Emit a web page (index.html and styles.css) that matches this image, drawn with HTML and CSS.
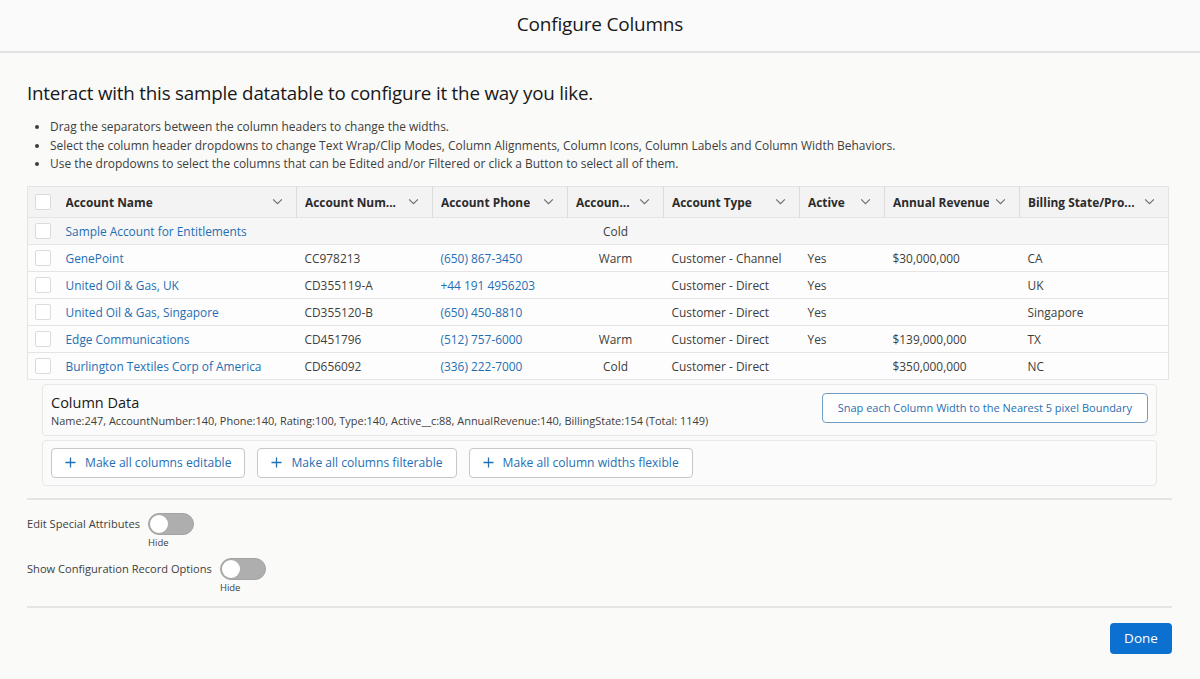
FILE: index.html
```html
<!DOCTYPE html>
<html>
<head>
<meta charset="utf-8">
<link rel="stylesheet" href="styles.css">
</head>
<body>
<header class="modal-header"><h1 class="modal-title">Configure Columns</h1></header>
<main class="modal-body">
  <h2 class="intro">Interact with this sample datatable to configure it the way you like.</h2>
  <ul class="tips">
    <li>Drag the separators between the column headers to change the widths.</li>
    <li>Select the column header dropdowns to change Text Wrap/Clip Modes, Column Alignments, Column Icons, Column Labels and Column Width Behaviors.</li>
    <li>Use the dropdowns to select the columns that can be Edited and/or Filtered or click a Button to select all of them.</li>
  </ul>

  <table class="dt">
    <colgroup>
      <col class="c-chk"><col class="c-name"><col class="c-num"><col class="c-phone"><col class="c-rating"><col class="c-type"><col class="c-active"><col class="c-rev"><col class="c-bill">
    </colgroup>
    <thead>
      <tr>
        <th><span class="cb"></span></th>
        <th><div class="th-in"><span class="th-label">Account Name</span><svg class="chev" viewBox="0 0 12 8"><path d="M1 1.5l5 5 5-5"/></svg></div></th>
        <th><div class="th-in"><span class="th-label">Account Num...</span><svg class="chev" viewBox="0 0 12 8"><path d="M1 1.5l5 5 5-5"/></svg></div></th>
        <th><div class="th-in"><span class="th-label">Account Phone</span><svg class="chev" viewBox="0 0 12 8"><path d="M1 1.5l5 5 5-5"/></svg></div></th>
        <th><div class="th-in"><span class="th-label">Accoun...</span><svg class="chev" viewBox="0 0 12 8"><path d="M1 1.5l5 5 5-5"/></svg></div></th>
        <th><div class="th-in"><span class="th-label">Account Type</span><svg class="chev" viewBox="0 0 12 8"><path d="M1 1.5l5 5 5-5"/></svg></div></th>
        <th><div class="th-in"><span class="th-label">Active</span><svg class="chev" viewBox="0 0 12 8"><path d="M1 1.5l5 5 5-5"/></svg></div></th>
        <th><div class="th-in"><span class="th-label">Annual Revenue</span><svg class="chev" viewBox="0 0 12 8"><path d="M1 1.5l5 5 5-5"/></svg></div></th>
        <th class="last"><div class="th-in"><span class="th-label">Billing State/Pro...</span><svg class="chev" viewBox="0 0 12 8"><path d="M1 1.5l5 5 5-5"/></svg></div></th>
      </tr>
    </thead>
    <tbody>
      <tr class="hover">
        <td><span class="cb"></span></td><td class="link">Sample Account for Entitlements</td><td></td><td></td><td class="center">Cold</td><td></td><td></td><td></td><td></td>
      </tr>
      <tr>
        <td><span class="cb"></span></td><td class="link">GenePoint</td><td>CC978213</td><td class="link">(650) 867-3450</td><td class="center">Warm</td><td>Customer - Channel</td><td>Yes</td><td>$30,000,000</td><td>CA</td>
      </tr>
      <tr>
        <td><span class="cb"></span></td><td class="link">United Oil &amp; Gas, UK</td><td>CD355119-A</td><td class="link">+44 191 4956203</td><td class="center"></td><td>Customer - Direct</td><td>Yes</td><td></td><td>UK</td>
      </tr>
      <tr>
        <td><span class="cb"></span></td><td class="link">United Oil &amp; Gas, Singapore</td><td>CD355120-B</td><td class="link">(650) 450-8810</td><td class="center"></td><td>Customer - Direct</td><td>Yes</td><td></td><td>Singapore</td>
      </tr>
      <tr>
        <td><span class="cb"></span></td><td class="link">Edge Communications</td><td>CD451796</td><td class="link">(512) 757-6000</td><td class="center">Warm</td><td>Customer - Direct</td><td>Yes</td><td>$139,000,000</td><td>TX</td>
      </tr>
      <tr>
        <td><span class="cb"></span></td><td class="link">Burlington Textiles Corp of America</td><td>CD656092</td><td class="link">(336) 222-7000</td><td class="center">Cold</td><td>Customer - Direct</td><td></td><td>$350,000,000</td><td>NC</td>
      </tr>
    </tbody>
  </table>

  <section class="card col-data">
    <div class="col-data-text">
      <div class="card-title">Column Data</div>
      <div class="card-detail">Name:247, AccountNumber:140, Phone:140, Rating:100, Type:140, Active__c:88, AnnualRevenue:140, BillingState:154 (Total: 1149)</div>
    </div>
    <button class="btn btn-snap">Snap each Column Width to the Nearest 5 pixel Boundary</button>
  </section>

  <section class="card btn-row">
    <button class="btn"><svg class="plus" viewBox="0 0 12 12"><path d="M6 0.5v11M0.5 6h11"/></svg>Make all columns editable</button>
    <button class="btn"><svg class="plus" viewBox="0 0 12 12"><path d="M6 0.5v11M0.5 6h11"/></svg>Make all columns filterable</button>
    <button class="btn"><svg class="plus" viewBox="0 0 12 12"><path d="M6 0.5v11M0.5 6h11"/></svg>Make all column widths flexible</button>
  </section>

  <hr class="divider">

  <div class="toggle-row">
    <span class="toggle-label">Edit Special Attributes</span>
    <div class="toggle-wrap"><span class="toggle"><span class="knob"></span></span><span class="toggle-state">Hide</span></div>
  </div>
  <div class="toggle-row">
    <span class="toggle-label">Show Configuration Record Options</span>
    <div class="toggle-wrap"><span class="toggle"><span class="knob"></span></span><span class="toggle-state">Hide</span></div>
  </div>

  <hr class="divider divider-bottom">

  <div class="footer"><button class="btn-done">Done</button></div>
</main>
</body>
</html>
```
FILE: styles.css
```css
* { box-sizing: border-box; }
html, body { margin: 0; padding: 0; }
body {
  background: #fafaf9;
  font-family: "Open Sans", "Noto Sans", sans-serif;
  color: #3e3e3c;
  width: 1200px;
  height: 679px;
  overflow: hidden;
}
.modal-header {
  height: 53px;
  border-bottom: 2px solid #e2e2e2;
  display: flex;
  align-items: center;
  justify-content: center;
  padding-bottom: 4px;
  background: #fafafa;
}
.modal-title {
  margin: 0;
  font-size: 19px;
  font-weight: 400;
  color: #181818;
  letter-spacing: -0.2px;
}
.modal-body {
  padding: 0 28px 0 27px;
}
.intro {
  margin: 27px 0 0 0;
  font-size: 18.8px;
  line-height: 26px;
  font-weight: 400;
  color: #181818;
  letter-spacing: -0.2px;
}
.tips {
  margin: 12px 0 0 0;
  padding-left: 23px;
  font-size: 11.95px;
  line-height: 18.5px;
  color: #3e3e3c;
}

.dt {
  margin-top: 12px;
  border-collapse: collapse;
  table-layout: fixed;
  width: 1141px;
  font-size: 11.9px;
  background: #fdfdfd;
  border-left: 1px solid #e5e5e5;
  border-right: 1px solid #e5e5e5;
}
.c-chk { width: 30px; }
.c-name { width: 239px; }
.c-num { width: 136px; }
.c-phone { width: 135px; }
.c-rating { width: 96px; }
.c-type { width: 136px; }
.c-active { width: 85px; }
.c-rev { width: 135px; }
.c-bill { width: 149px; }

.dt thead tr {
  background: #f3f3f3;
  height: 31px;
  border-top: 1px solid #e5e5e5;
  border-bottom: 1px solid #e5e5e5;
}
.dt th {
  padding: 0;
  text-align: left;
  font-weight: 700;
  color: #2b2b2b;
  border-right: 1px solid #dcdcdc;
}
.dt th:first-child { border-right: none; padding-left: 7px; }
.dt th.last { border-right: none; }
.th-in {
  display: flex;
  align-items: center;
  justify-content: space-between;
  padding: 0 13px 0 8px;
  white-space: nowrap;
}
.th-label { overflow: hidden; }
.chev {
  width: 11px;
  height: 7px;
  fill: none;
  stroke: #706e6b;
  stroke-width: 1.3;
  flex: none;
  margin-left: 6px;
}
.dt tbody tr {
  height: 27px;
  border-bottom: 1px solid #e5e5e5;
}
.dt tbody tr.hover { background: #f6f6f6; }
.dt td {
  padding: 0 0 0 8px;
  white-space: nowrap;
  overflow: hidden;
  color: #3e3e3c;
}
.dt td:first-child { padding-left: 7px; }
.dt td.link { color: #1f6fb4; }
.dt td.center { text-align: center; padding: 0; }
.cb {
  display: block;
  width: 16px;
  height: 16px;
  border: 1px solid #dddbda;
  border-radius: 2px;
  background: #fff;
}

.card {
  margin: 4px 15px 0 15px;
  border: 1px solid #e8e8e8;
  border-radius: 4px;
  background: #fbfbfb;
}
.col-data {
  display: flex;
  align-items: flex-start;
  justify-content: space-between;
  height: 52px;
  padding: 8px 8px 0 8px;
}
.card-title {
  font-size: 14.5px;
  line-height: 20px;
  color: #181818;
}
.card-detail {
  font-size: 10.95px;
  line-height: 16px;
  color: #3e3e3c;
}
.btn {
  display: inline-flex;
  align-items: center;
  height: 30px;
  padding: 0 13px;
  border: 1px solid #c9c7c5;
  border-radius: 4px;
  background: #fff;
  color: #1f6fb4;
  font-family: inherit;
  font-size: 12.1px;
  cursor: pointer;
}
.btn-snap {
  height: 30px;
  padding: 0 15px;
  border-color: #6f9dc4;
  font-size: 11px;
}
.btn-row {
  display: flex;
  gap: 12px;
  height: 46px;
  padding: 7px 8px 0 8px;
}
.plus {
  width: 11px;
  height: 11px;
  margin-right: 9px;
  stroke: #1f6fb4;
  stroke-width: 1.4;
  fill: none;
}
.divider {
  margin: 12px 0 0 0;
  border: none;
  border-top: 2px solid #e5e5e5;
}
.toggle-row {
  display: flex;
  align-items: flex-start;
  gap: 8px;
  margin-top: 13px;
  height: 37px;
}
.toggle-row + .toggle-row { margin-top: 8px; }
.toggle-label {
  font-size: 11.1px;
  line-height: 22px;
  color: #3e3e3c;
}
.toggle-wrap {
  display: flex;
  flex-direction: column;
  align-items: flex-start;
}
.toggle {
  width: 46px;
  height: 22px;
  border-radius: 11px;
  background: #aeaeae;
  border: 1px solid #a3a3a3;
  position: relative;
  display: block;
}
.knob {
  position: absolute;
  left: 1px;
  top: 1px;
  width: 18px;
  height: 18px;
  border-radius: 50%;
  background: #fff;
}
.toggle-state {
  font-size: 9.5px;
  line-height: 15px;
  color: #3e3e3c;
}
.divider-bottom { margin-top: 11px; }
.footer {
  display: flex;
  justify-content: flex-end;
  padding-top: 15px;
}
.btn-done {
  width: 62px;
  height: 31px;
  border: none;
  border-radius: 4px;
  background: #0b70d0;
  color: #fff;
  font-family: inherit;
  font-size: 13.5px;
}
```
